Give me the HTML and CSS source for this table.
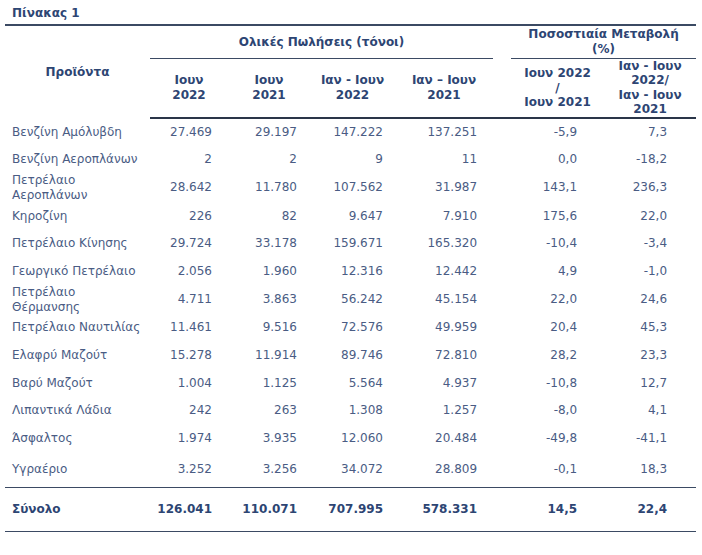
FILE: index.html
```html
<!DOCTYPE html>
<html lang="el">
<head>
<meta charset="utf-8">
<title>Πίνακας 1</title>
<link rel="stylesheet" href="styles.css">
</head>
<body>
<div class="page">
  <div class="title">Πίνακας 1</div>
  <table class="sales">
    <colgroup>
      <col class="c-prod"><col class="c1"><col class="c2"><col class="c3"><col class="c4"><col class="c-gap"><col class="c5"><col class="c6">
    </colgroup>
    <thead>
      <tr class="h1">
        <th rowspan="2" class="prod-h">Προϊόντα</th>
        <th colspan="4" class="group">Ολικές Πωλήσεις (τόνοι)</th>
        <th class="gap"></th>
        <th colspan="2" class="group">Ποσοστιαία Μεταβολή<br>(%)</th>
      </tr>
      <tr class="h2">
        <th>Ιουν<br>2022</th>
        <th>Ιουν<br>2021</th>
        <th>Ιαν - Ιουν<br>2022</th>
        <th>Ιαν – Ιουν<br>2021</th>
        <th class="gap"></th>
        <th>Ιουν 2022<br>/<br>Ιουν 2021</th>
        <th>Ιαν - Ιουν<br>2022/<br>Ιαν - Ιουν<br>2021</th>
      </tr>
    </thead>
    <tbody>
      <tr class="r28"><td class="prod">Βενζίνη Αμόλυβδη</td><td class="n1">27.469</td><td class="n2">29.197</td><td class="n3">147.222</td><td class="n4">137.251</td><td></td><td class="n5">-5,9</td><td class="n6">7,3</td></tr>
      <tr class="r27"><td class="prod">Βενζίνη Αεροπλάνων</td><td class="n1">2</td><td class="n2">2</td><td class="n3">9</td><td class="n4">11</td><td></td><td class="n5">0,0</td><td class="n6">-18,2</td></tr>
      <tr class="r28"><td class="prod">Πετρέλαιο<br>Αεροπλάνων</td><td class="n1">28.642</td><td class="n2">11.780</td><td class="n3">107.562</td><td class="n4">31.987</td><td></td><td class="n5">143,1</td><td class="n6">236,3</td></tr>
      <tr class="r28"><td class="prod">Κηροζίνη</td><td class="n1">226</td><td class="n2">82</td><td class="n3">9.647</td><td class="n4">7.910</td><td></td><td class="n5">175,6</td><td class="n6">22,0</td></tr>
      <tr class="r27"><td class="prod">Πετρέλαιο Κίνησης</td><td class="n1">29.724</td><td class="n2">33.178</td><td class="n3">159.671</td><td class="n4">165.320</td><td></td><td class="n5">-10,4</td><td class="n6">-3,4</td></tr>
      <tr class="r28"><td class="prod">Γεωργικό Πετρέλαιο</td><td class="n1">2.056</td><td class="n2">1.960</td><td class="n3">12.316</td><td class="n4">12.442</td><td></td><td class="n5">4,9</td><td class="n6">-1,0</td></tr>
      <tr class="r28"><td class="prod">Πετρέλαιο<br>Θέρμανσης</td><td class="n1">4.711</td><td class="n2">3.863</td><td class="n3">56.242</td><td class="n4">45.154</td><td></td><td class="n5">22,0</td><td class="n6">24,6</td></tr>
      <tr class="r27"><td class="prod">Πετρέλαιο Ναυτιλίας</td><td class="n1">11.461</td><td class="n2">9.516</td><td class="n3">72.576</td><td class="n4">49.959</td><td></td><td class="n5">20,4</td><td class="n6">45,3</td></tr>
      <tr class="r28"><td class="prod">Ελαφρύ Μαζούτ</td><td class="n1">15.278</td><td class="n2">11.914</td><td class="n3">89.746</td><td class="n4">72.810</td><td></td><td class="n5">28,2</td><td class="n6">23,3</td></tr>
      <tr class="r28"><td class="prod">Βαρύ Μαζούτ</td><td class="n1">1.004</td><td class="n2">1.125</td><td class="n3">5.564</td><td class="n4">4.937</td><td></td><td class="n5">-10,8</td><td class="n6">12,7</td></tr>
      <tr class="r27"><td class="prod">Λιπαντικά Λάδια</td><td class="n1">242</td><td class="n2">263</td><td class="n3">1.308</td><td class="n4">1.257</td><td></td><td class="n5">-8,0</td><td class="n6">4,1</td></tr>
      <tr class="r28"><td class="prod">Άσφαλτος</td><td class="n1">1.974</td><td class="n2">3.935</td><td class="n3">12.060</td><td class="n4">20.484</td><td></td><td class="n5">-49,8</td><td class="n6">-41,1</td></tr>
      <tr class="r35"><td class="prod">Υγραέριο</td><td class="n1">3.252</td><td class="n2">3.256</td><td class="n3">34.072</td><td class="n4">28.809</td><td></td><td class="n5">-0,1</td><td class="n6">18,3</td></tr>
    </tbody>
    <tfoot>
      <tr class="total"><td class="prod">Σύνολο</td><td class="n1">126.041</td><td class="n2">110.071</td><td class="n3">707.995</td><td class="n4">578.331</td><td></td><td class="n5">14,5</td><td class="n6">22,4</td></tr>
    </tfoot>
  </table>
</div>
</body>
</html>
```

FILE: styles.css
```css
html, body {
  margin: 0;
  padding: 0;
  background: #ffffff;
}

.page {
  padding: 6px 0 0 5px;
  font-family: "DejaVu Sans", Verdana, sans-serif;
  font-size: 12px;
  color: #4a5c84;
}

.title {
  font-weight: bold;
  color: #2d4573;
  padding-left: 7px;
  line-height: 14px;
  height: 18px;
}

.sales {
  border-collapse: collapse;
  table-layout: fixed;
  width: 691px;
  border-top: 2px solid #3b4a63;
}

.c-prod { width: 145px; }
.c1 { width: 78px; }
.c2 { width: 82px; }
.c3 { width: 85px; }
.c4 { width: 98px; }
.c-gap { width: 18px; }
.c5 { width: 93px; }
.c6 { width: 92px; }

th {
  font-weight: bold;
  color: #2d4573;
  text-align: center;
  line-height: 14.5px;
  padding: 0;
  white-space: nowrap;
}

.h1 { height: 33px; }
.h2 { height: 60px; }

.group {
  border-bottom: 1.5px solid #3b4a63;
  vertical-align: middle;
}

.gap { border: none; }

.prod-h { vertical-align: middle; }

thead .h2 th { border-bottom: 2px solid #2a3548; }

td {
  padding: 0;
  line-height: 14.5px;
  white-space: nowrap;
  vertical-align: middle;
  text-align: right;
}

td.prod {
  text-align: left;
  padding-left: 7px;
}

.n1 { padding-right: 16px; }
.n2 { padding-right: 13px; }
.n3 { padding-right: 12px; }
.n4 { padding-right: 16px; }
.n5 { padding-right: 27px; }
.n6 { padding-right: 29px; }

.r27 { height: 27px; }
.r28 { height: 28px; }
.r35 { height: 35px; }

.total {
  height: 44px;
  font-weight: bold;
  color: #2d4573;
  border-top: 1.5px solid #3b4a63;
  border-bottom: 1.5px solid #3b4a63;
}
```
